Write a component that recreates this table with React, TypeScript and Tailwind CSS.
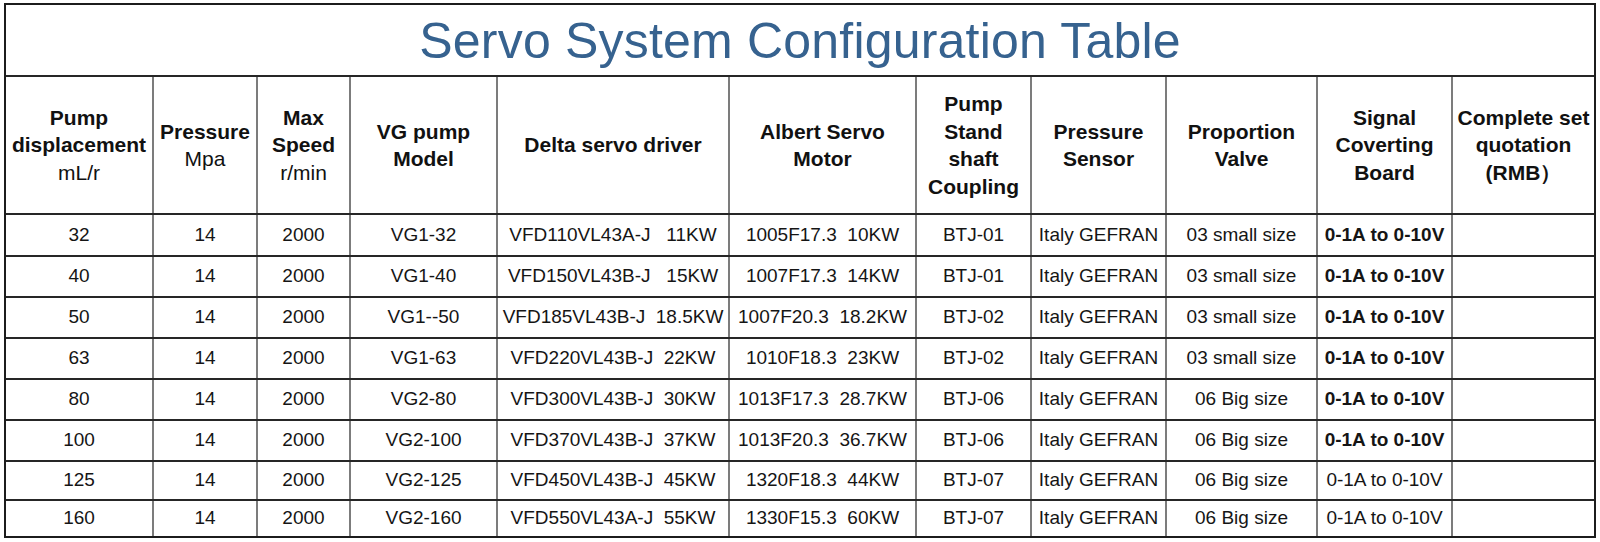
import React from 'react';

type Row = {
  disp: string;
  model: string;
  driver: string;
  motor: string;
  coupling: string;
  valve: string;
  boldSignal: boolean;
  h: string;
};

const ROWS: Row[] = [
  { disp: '32', model: 'VG1-32', driver: 'VFD110VL43A-J   11KW', motor: '1005F17.3  10KW', coupling: 'BTJ-01', valve: '03 small size', boldSignal: true, h: 'h-[42px]' },
  { disp: '40', model: 'VG1-40', driver: 'VFD150VL43B-J   15KW', motor: '1007F17.3  14KW', coupling: 'BTJ-01', valve: '03 small size', boldSignal: true, h: 'h-[41px]' },
  { disp: '50', model: 'VG1--50', driver: 'VFD185VL43B-J  18.5KW', motor: '1007F20.3  18.2KW', coupling: 'BTJ-02', valve: '03 small size', boldSignal: true, h: 'h-[41px]' },
  { disp: '63', model: 'VG1-63', driver: 'VFD220VL43B-J  22KW', motor: '1010F18.3  23KW', coupling: 'BTJ-02', valve: '03 small size', boldSignal: true, h: 'h-[41px]' },
  { disp: '80', model: 'VG2-80', driver: 'VFD300VL43B-J  30KW', motor: '1013F17.3  28.7KW', coupling: 'BTJ-06', valve: '06 Big size', boldSignal: true, h: 'h-[41px]' },
  { disp: '100', model: 'VG2-100', driver: 'VFD370VL43B-J  37KW', motor: '1013F20.3  36.7KW', coupling: 'BTJ-06', valve: '06 Big size', boldSignal: true, h: 'h-[41px]' },
  { disp: '125', model: 'VG2-125', driver: 'VFD450VL43B-J  45KW', motor: '1320F18.3  44KW', coupling: 'BTJ-07', valve: '06 Big size', boldSignal: false, h: 'h-[39px]' },
  { disp: '160', model: 'VG2-160', driver: 'VFD550VL43A-J  55KW', motor: '1330F15.3  60KW', coupling: 'BTJ-07', valve: '06 Big size', boldSignal: false, h: 'h-[35px]' },
];

// header lines: [text, bold]
const HEADERS: [string, boolean][][] = [
  [['Pump', true], ['displacement', true], ['mL/r', false]],
  [['Pressure', true], ['Mpa', false]],
  [['Max', true], ['Speed', true], ['r/min', false]],
  [['VG pump', true], ['Model', true]],
  [['Delta servo driver', true]],
  [['Albert Servo', true], ['Motor', true]],
  [['Pump', true], ['Stand', true], ['shaft', true], ['Coupling', true]],
  [['Pressure', true], ['Sensor', true]],
  [['Proportion', true], ['Valve', true]],
  [['Signal', true], ['Coverting', true], ['Board', true]],
  [['Complete set', true], ['quotation', true], ['(RMB）', true]],
];

const GRID = 'grid grid-cols-[148px_104px_93px_147px_232px_187px_115px_135px_151px_135px_141px]';

const Cell = ({ last, bold, children }: { last?: boolean; bold?: boolean; children?: React.ReactNode }) => (
  <div
    className={`flex items-center justify-center whitespace-pre text-[19px] text-[#151515] ${bold ? 'font-bold' : ''} ${
      last ? '' : 'border-r-2 border-r-[#7c7c7c]'
    }`}
  >
    {children}
  </div>
);

export default function App() {
  return (
    <div className="w-[1600px] h-[542px] bg-white font-['Liberation_Sans',Arial,sans-serif]">
      <div className="ml-[4px] mt-[3px] w-[1592px] border-2 border-[#1c1c1c]">
        <div className="h-[72px] flex items-center justify-center border-b-2 border-b-[#262626]">
          <h1 className="text-[50px] leading-none text-[#36628f] tracking-[0.2px] pt-[2px]">Servo System Configuration Table</h1>
        </div>

        <div className={`${GRID} h-[138px] border-b-2 border-b-[#262626]`}>
          {HEADERS.map((lines, i) => (
            <div
              key={i}
              className={`flex flex-col items-center justify-center text-[21px] leading-[27.5px] text-[#111] whitespace-nowrap ${
                i === HEADERS.length - 1 ? '' : 'border-r-2 border-r-[#7c7c7c]'
              }`}
            >
              {lines.map(([t, b], j) => (
                <span key={j} className={b ? 'font-bold' : 'font-normal'}>
                  {t}
                </span>
              ))}
            </div>
          ))}
        </div>

        {ROWS.map((r, i) => (
          <div
            key={r.disp}
            className={`${GRID} ${r.h} ${i === ROWS.length - 1 ? '' : 'border-b-2 border-b-[#262626]'}`}
          >
            <Cell>{r.disp}</Cell>
            <Cell>14</Cell>
            <Cell>2000</Cell>
            <Cell>{r.model}</Cell>
            <Cell>{r.driver}</Cell>
            <Cell>{r.motor}</Cell>
            <Cell>{r.coupling}</Cell>
            <Cell>Italy GEFRAN</Cell>
            <Cell>{r.valve}</Cell>
            <Cell bold={r.boldSignal}>0-1A to 0-10V</Cell>
            <Cell last />
          </div>
        ))}
      </div>
    </div>
  );
}
